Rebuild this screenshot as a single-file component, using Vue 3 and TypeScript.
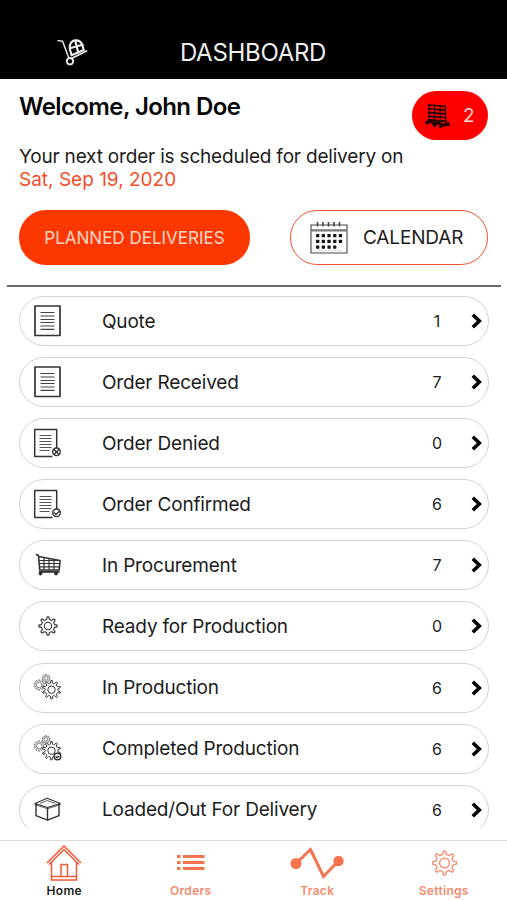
<script setup lang="ts">
interface Row {
  label: string
  count: number
  icon: 'doc' | 'denied' | 'confirmed' | 'cart' | 'gear' | 'gears' | 'gearsDone' | 'box'
}

const rows: Row[] = [
  { label: 'Quote', count: 1, icon: 'doc' },
  { label: 'Order Received', count: 7, icon: 'doc' },
  { label: 'Order Denied', count: 0, icon: 'denied' },
  { label: 'Order Confirmed', count: 6, icon: 'confirmed' },
  { label: 'In Procurement', count: 7, icon: 'cart' },
  { label: 'Ready for Production', count: 0, icon: 'gear' },
  { label: 'In Production', count: 6, icon: 'gears' },
  { label: 'Completed Production', count: 6, icon: 'gearsDone' },
  { label: 'Loaded/Out For Delivery', count: 6, icon: 'box' },
]

// Closed outline of a cog with its first tooth pointing up.
function cog(cx: number, cy: number, outer: number, inner: number, teeth = 8): string {
  const step = (Math.PI * 2) / teeth
  const at = (r: number, a: number) =>
    `${(cx + r * Math.sin(a)).toFixed(2)} ${(cy - r * Math.cos(a)).toFixed(2)}`
  let d = ''
  for (let i = 0; i < teeth; i++) {
    const a = i * step
    d += `${i ? 'L' : 'M'}${at(inner, a - step * 0.26)}L${at(outer, a - step * 0.12)}`
    d += `L${at(outer, a + step * 0.12)}L${at(inner, a + step * 0.26)}`
    d += `Q${at(inner * 0.93, a + step * 0.5)} ${at(inner, a + step * 0.74)}`
  }
  return d + 'Z'
}

const dotRows = [5, 5, 4]
</script>

<template>
  <main class="screen">
    <header class="topbar">
      <svg class="trolley" width="32" height="28" viewBox="0 0 32 28">
        <g fill="none" stroke="#eee" stroke-width="1.4" stroke-linecap="round" stroke-linejoin="round">
          <path d="M1 1.600l4.600.6L11.600 18.500" />
          <path d="M14.400 19.500L29.500 12" stroke-width="1.700" />
          <circle cx="13" cy="22.200" r="3.200" stroke-width="1.900" />
          <path d="M14.500 16.300L12.800 9.500C12.400 4 15 1.400 18.700 1.400c4 0 6.100 2.600 6.800 5.100l1.200 4.500z" stroke-width="2.100" />
          <path d="M18.200 1.600l3 12M12.900 9.200l12.700-3.400" stroke-width="2.200" />
        </g>
      </svg>
      <h1 class="title">DASHBOARD</h1>
      <span></span>
    </header>

    <section class="intro">
      <div class="greet">
        <div>
          <h2 class="welcome">Welcome, John Doe</h2>
          <p class="next">Your next order is scheduled for delivery on</p>
          <p class="date">Sat, Sep 19, 2020</p>
        </div>
        <div class="badge">
          <svg width="25" height="26" viewBox="0 0 25 26">
            <g fill="none" stroke="#260000" stroke-linecap="round">
              <path d="M4.500 1.500l-.6 17M9.500 2l-.2 18M15 2.500l.4 18M20 3l1 18" stroke-width="1.300" />
              <path d="M3.500 2l17 1.500M3.500 6l17 1.200M3.800 9.600l17 1.200M3.800 13.300l17 1.200M3.500 16.800l18 1.500" stroke-width="1.700" />
              <path d="M2 19.300l3-1.500 5 3.500 3-2 4.500 3 5.500-1.200" stroke-width="3" />
            </g>
            <g fill="#180000">
              <circle cx="2.200" cy="20" r="1.700" /><circle cx="9.500" cy="22.300" r="1.700" />
              <circle cx="15.500" cy="23.500" r="1.600" /><circle cx="23" cy="21.500" r="1.700" />
            </g>
          </svg>
          <span class="badge-count">2</span>
        </div>
      </div>
      <div class="actions">
        <button class="planned">PLANNED DELIVERIES</button>
        <button class="calendar">
          <svg width="38" height="32" viewBox="0 0 38 32">
            <g fill="none" stroke="#444">
              <path d="M1 3h36v28H1z" stroke-width="1.100" />
              <path d="M1 8.300h36" stroke="#777" stroke-width="2.200" />
              <path d="M7.500 0v4.500M13 0v4.500M18.500 0v4.500M24 0v4.500M29.500 0v4.500" stroke-width="1.600" />
              <path d="M6 28.700h26" stroke="#ccc" stroke-width="0.700" />
            </g>
            <g fill="#151515">
              <template v-for="(n, r) in dotRows" :key="r">
                <rect v-for="c in n" :key="c" :x="0.300 + c * 5.700" :y="12 + r * 5.700" width="3.300" height="3.300" rx="0.500" />
              </template>
            </g>
          </svg>
          <span class="calendar-label">CALENDAR</span>
        </button>
      </div>
    </section>

    <div class="list">
      <a v-for="row in rows" :key="row.label" class="row">
        <svg class="row-icon" width="30" height="34" viewBox="0 0 30 34" fill="none" stroke="#333" stroke-linejoin="round">
          <template v-if="row.icon === 'doc'">
            <path d="M2 2h25v29.500H2z" stroke-width="1.700" />
            <path d="M7.500 8.500h14M7.500 12h14M7.500 15.500h14M7.500 18.500h14M7.500 22h14M7.500 25.300h14" stroke="#444" stroke-width="1.200" />
          </template>
          <template v-else-if="row.icon === 'denied' || row.icon === 'confirmed'">
            <path d="M19.500 30.500H1.700v-27h22v18.500" stroke-width="1.500" />
            <path d="M6.500 9.500h12M6.500 12.500h12M6.500 15.500h12M6.500 18.500h12M6.500 21.500h12M6.500 24.500h10" stroke="#555" stroke-width="1.100" />
            <circle cx="23.500" cy="25.800" r="3.800" stroke-width="1.400" />
            <path v-if="row.icon === 'denied'" d="M21 23.500l5 5m0-5l-5 5" stroke-width="1.500" />
            <path v-else d="M21 25.600l2 2 3.800-3.800" stroke-width="1.400" />
          </template>
          <template v-else-if="row.icon === 'cart'">
            <path d="M3 6.200l2.500 1.300 1.200 14.500h19.500l.8-9.500L5.800 8.500" stroke-width="1.600" />
            <path d="M6 12.500h20.500M6.300 15.500h20.200M6.500 18.800h20M11 10v12M16 11v11M21 12v10" stroke-width="1.200" />
            <path d="M6 23.800h20.500" stroke-width="2" />
            <circle cx="7.500" cy="25.500" r="1.500" fill="#222" /><circle cx="23" cy="25.500" r="1.500" fill="#222" />
          </template>
          <template v-else-if="row.icon === 'gear'">
            <path :d="cog(15, 17, 9.200, 6.800)" stroke-width="1.100" />
            <circle cx="15" cy="17" r="3.700" stroke-width="1.100" />
          </template>
          <template v-else-if="row.icon === 'box'">
            <path d="M3 11v11.700l11.500 4.500L26 22.700V11M14.500 14.500v12.700" stroke-width="1.400" />
            <path d="M2 10.500l12.200-5.200 13 5.200-12.700 4z" stroke-width="1.200" />
            <path d="M2 10.500v1.200l12.500 4 12.700-4v-1.200M7 10.500l7.300-3 8 3" stroke-width="0.800" />
          </template>
          <template v-else>
            <g stroke="#777" stroke-width="0.900">
              <path :d="cog(6.200, 14, 5.300, 4, 10)" /><circle cx="6.200" cy="14" r="2.700" />
              <path :d="cog(13, 7.500, 4.200, 3.100, 10)" /><circle cx="13" cy="7.500" r="1.800" />
            </g>
            <path :d="cog(18.500, 18.700, 9.200, 6.600, 10)" fill="#fff" stroke-width="1" />
            <circle cx="18.500" cy="18.700" r="3.700" stroke-width="1" />
            <g v-if="row.icon === 'gearsDone'" stroke="#222" stroke-width="1.300">
              <circle cx="24.500" cy="24.500" r="3.300" fill="#fff" />
              <path d="M22.600 24.500l1.500 1.300 2.300-2" />
            </g>
          </template>
        </svg>
        <span class="row-label">{{ row.label }}</span>
        <span class="row-count">{{ row.count }}</span>
        <svg class="chevron" width="12" height="16" viewBox="0 0 12 16">
          <path d="M1.800 1.800L8.300 8l-6.500 6.200" fill="none" stroke="#000" stroke-width="3.600" />
        </svg>
      </a>
    </div>

    <nav class="tabs">
      <a class="tab active">
        <svg width="36" height="36" viewBox="0 0 36 36" fill="none" stroke="#f05a38" stroke-width="1.500">
          <path d="M1 18L18 1l17 17M3 19.500L18 4.500l15 15" />
          <path d="M5.500 17v18h25V17M5.500 31.500h25M15 31.500V19.500h6.500v12" />
        </svg>
        <span>Home</span>
      </a>
      <a class="tab">
        <svg width="36" height="36" viewBox="0 0 36 36" fill="#f7724f">
          <path d="M4 10h3.500v3H4zM10 10h21.500v3H10zM4 16h3.500v3H4zM10 16h21.500v3H10zM4 22h3.500v3H4zM10 22h21.500v3H10z" />
        </svg>
        <span>Orders</span>
      </a>
      <a class="tab">
        <svg width="54" height="36" viewBox="0 0 54 36" fill="#f7724f">
          <path d="M6 18.500L20.500 4.500 33.500 31.500 48.500 16" fill="none" stroke="#f7724f" stroke-width="3" />
          <circle cx="6" cy="18.500" r="5.500" /><circle cx="48.500" cy="16" r="5.200" />
        </svg>
        <span>Track</span>
      </a>
      <a class="tab">
        <svg width="36" height="36" viewBox="0 0 36 36" fill="none" stroke="#f58a6c" stroke-width="1.300" stroke-linejoin="round">
          <path :d="cog(18.500, 18, 12, 8.900)" /><circle cx="18.500" cy="18" r="4.900" />
        </svg>
        <span>Settings</span>
      </a>
    </nav>
  </main>
</template>

<style>
body {
  margin: 0;
  background: #fff;
}
</style>

<style scoped>
.screen {
  display: flex;
  flex-direction: column;
  width: 507px;
  height: 900px;
  overflow: hidden;
  background: #fff;
  color: #1c1c1c;
  font-family: Inter, "Liberation Sans", sans-serif;
}
h1, h2, p {
  margin: 0;
  font-weight: 400;
}
.topbar {
  box-sizing: border-box;
  display: grid;
  grid-template-columns: 124px 258px 1fr;
  align-items: center;
  height: 79px;
  padding-top: 26px;
  background: #000;
}
.trolley {
  margin: 1px 0 0 57px;
}
.title {
  color: #eee;
  font-size: 24px;
  line-height: 30px;
  text-align: center;
  letter-spacing: -0.3px;
}
.intro {
  box-sizing: border-box;
  height: 208px;
  margin: 0 6px 0 7px;
  padding: 12px 13px 0 12px;
  border-bottom: 2px solid #6a6a6a;
}
.greet {
  display: flex;
  justify-content: space-between;
  height: 119px;
}
.welcome {
  color: #080808;
  font-size: 24px;
  font-weight: 600;
  line-height: 32px;
  letter-spacing: -0.6px;
}
.next, .date {
  font-size: 19px;
  line-height: 23px;
  white-space: nowrap;
}
.next {
  margin-top: 22px;
  letter-spacing: -0.19px;
}
.date {
  color: #f24d28;
}
.badge {
  box-sizing: border-box;
  display: flex;
  align-items: center;
  gap: 13px;
  width: 76px;
  height: 49px;
  padding-left: 13px;
  border-radius: 25px;
  background: #f00;
}
.badge-count {
  color: #ffdcdc;
  font-size: 19px;
}
.actions {
  display: flex;
  justify-content: space-between;
}
button {
  box-sizing: border-box;
  height: 55px;
  border: 0;
  border-radius: 27px;
  font-family: inherit;
  white-space: nowrap;
}
.planned {
  width: 231px;
  padding: 0;
  background: #fc3700;
  color: #ffd8ca;
  font-size: 17px;
}
.calendar {
  display: flex;
  align-items: center;
  gap: 15px;
  width: 198px;
  padding: 0 0 0 19px;
  border: 1px solid #f0522c;
  background: #fff;
  color: #1c1c1c;
  font-size: 19px;
}
.calendar-label {
  margin-top: -1px;
  letter-spacing: -0.15px;
}
.list {
  box-sizing: border-box;
  display: flex;
  flex-direction: column;
  gap: 11.100px;
  height: 541px;
  padding: 9px 18px 0 19px;
  overflow: hidden;
}
.row {
  box-sizing: border-box;
  display: grid;
  grid-template-columns: 69px 1fr 40px 26px;
  flex: none;
  align-items: center;
  height: 50px;
  padding: 0 5px 0 13px;
  border: 1px solid #d2d2d2;
  border-radius: 25px;
}
.row-label {
  font-size: 19px;
  letter-spacing: -0.18px;
  white-space: nowrap;
}
.row-count {
  font-size: 16px;
  text-align: center;
}
.chevron {
  margin-left: 14px;
}
.tabs {
  box-sizing: border-box;
  display: grid;
  grid-template-columns: repeat(4, 1fr);
  height: 60px;
  margin-top: 12px;
  padding: 4px 0 0 1px;
  border-top: 1px solid #ddd;
}
.tab {
  display: flex;
  flex-direction: column;
  align-items: center;
  color: #f58b6e;
  font-size: 12px;
  font-weight: 600;
  line-height: 15px;
  letter-spacing: 0.3px;
}
.tab span {
  margin-top: 2px;
}
.active {
  color: #1c1c1c;
}
</style>
